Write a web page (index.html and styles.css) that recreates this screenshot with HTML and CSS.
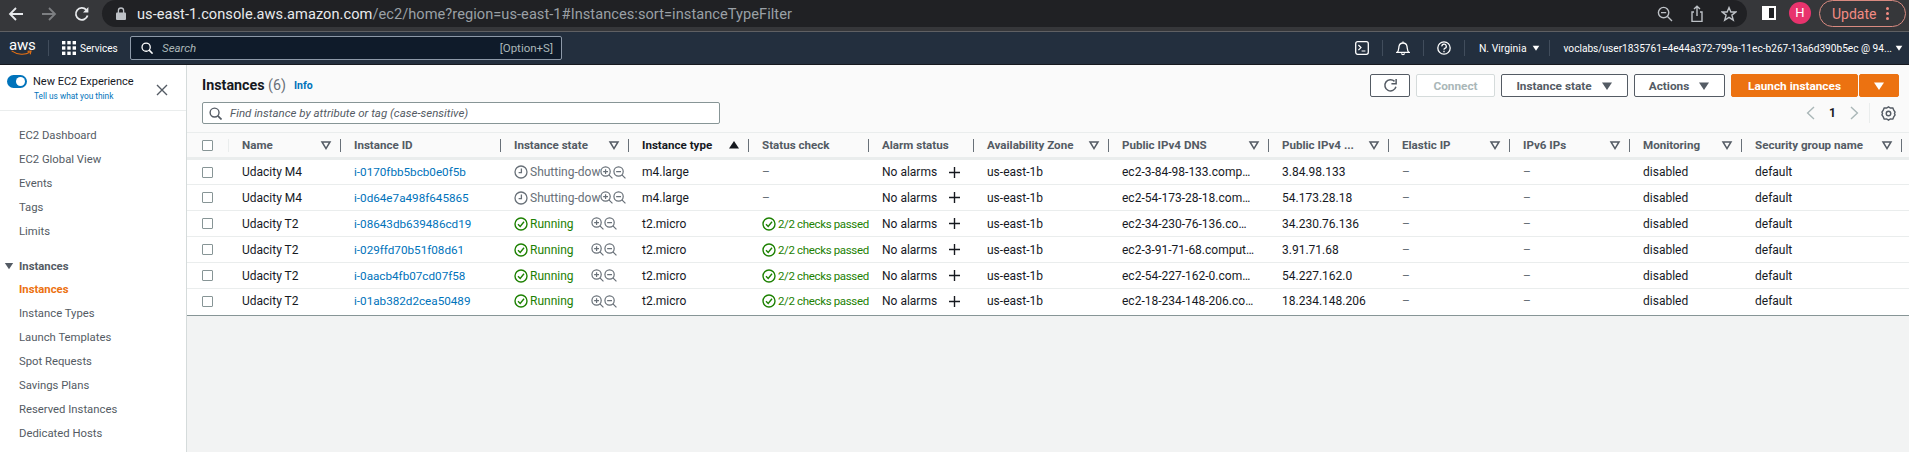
FILE: index.html
```html
<!DOCTYPE html>
<html>
<head>
    <meta charset="utf-8">
    <title>Instances | EC2 Management Console</title>
    <link rel="stylesheet" href="styles.css">
</head>
<body>
    <svg class="defs" width="0" height="0">
        <symbol id="i-clock" viewBox="0 0 14 14"><circle cx="7" cy="7" r="6" fill="none" stroke="currentColor" stroke-width="1.3"/><path d="M7.4 3.4V7.6H4.6" fill="none" stroke="currentColor" stroke-width="1.3"/></symbol>
        <symbol id="i-check" viewBox="0 0 14 14"><circle cx="7" cy="7" r="6" fill="none" stroke="currentColor" stroke-width="1.4"/><path d="M4 7.2 6.2 9.4 10 4.8" fill="none" stroke="currentColor" stroke-width="1.4"/></symbol>
        <symbol id="i-zoomin" viewBox="0 0 14 14"><circle cx="6" cy="6" r="5" fill="none" stroke="currentColor" stroke-width="1.3"/><path d="M9.6 9.6 13.4 13.4M3.4 6H8.6M6 3.4V8.6" fill="none" stroke="currentColor" stroke-width="1.3"/></symbol>
        <symbol id="i-zoomout" viewBox="0 0 14 14"><circle cx="6" cy="6" r="5" fill="none" stroke="currentColor" stroke-width="1.3"/><path d="M9.6 9.6 13.4 13.4M3.4 6H8.6" fill="none" stroke="currentColor" stroke-width="1.3"/></symbol>
        <symbol id="i-plus" viewBox="0 0 12 12"><path d="M6 0V12M0 6H12" fill="none" stroke="currentColor" stroke-width="1.5"/></symbol>
        <symbol id="i-filter" viewBox="0 0 12 12"><path d="M2 3H10L6 9.6Z" fill="none" stroke="currentColor" stroke-width="1.5"/></symbol>
        <symbol id="i-caret" viewBox="0 0 12 12"><path d="M1 2.5H11L6 10Z" fill="currentColor"/></symbol>
        <symbol id="i-sort" viewBox="0 0 12 12"><path d="M1 9.5H11L6 2Z" fill="currentColor"/></symbol>
        <symbol id="i-search" viewBox="0 0 14 14"><circle cx="6" cy="6" r="4.8" fill="none" stroke="currentColor" stroke-width="1.5"/><path d="M9.5 9.5 13.5 13.5" fill="none" stroke="currentColor" stroke-width="1.8"/></symbol>
    </svg>

    <header class="browser">
        <div class="browser-nav">
            <svg width="16" height="16" viewBox="0 0 16 16"><path d="M15 8H2M8 2 2 8 8 14" fill="none" stroke="#e8eaed" stroke-width="1.8"/></svg>
            <svg width="16" height="16" viewBox="0 0 16 16"><path d="M1 8H14M8 2 14 8 8 14" fill="none" stroke="#7d7f82" stroke-width="1.8"/></svg>
            <svg width="16" height="16" viewBox="0 0 16 16"><path d="M13.6 9.6A6 6 0 1 1 12.3 3.8" fill="none" stroke="#e8eaed" stroke-width="1.8"/><path d="M14.4 1V6.4H9Z" fill="#e8eaed"/></svg>
        </div>
        <div class="omnibox">
            <svg class="lock" width="10" height="13" viewBox="0 0 10 13"><path d="M2.4 6V3.6a2.6 2.6 0 0 1 5.2 0V6" fill="none" stroke="#bdc1c6" stroke-width="1.3"/><rect y="5.4" width="10" height="7.6" rx="1" fill="#bdc1c6"/></svg>
            <div class="url"><span class="url-host">us-east-1.console.aws.amazon.com</span>/ec2/home?region=us-east-1#Instances:sort=instanceTypeFilter</div>
            <div class="omni-icons">
                <svg width="16" height="16" viewBox="0 0 16 16"><circle cx="6.6" cy="6.6" r="5.2" fill="none" stroke="#bdc1c6" stroke-width="1.4"/><path d="M10.5 10.5 15 15M4 6.6H9.2" fill="none" stroke="#bdc1c6" stroke-width="1.4"/></svg>
                <svg width="16" height="18" viewBox="0 0 16 18"><path d="M5 7H3V16.4H13V7H11M8 11V1.4M5 4 8 1.2 11 4" fill="none" stroke="#bdc1c6" stroke-width="1.4"/></svg>
                <svg width="16" height="16" viewBox="0 0 16 16"><path d="M8 1.6 9.9 6H14.8L10.9 9.1 12.3 14.2 8 11.4 3.7 14.2 5.1 9.1 1.2 6H6.1Z" fill="none" stroke="#bdc1c6" stroke-width="1.4"/></svg>
            </div>
        </div>
        <div class="panel-btn"><span></span></div>
        <div class="avatar">H</div>
        <div class="update">Update<span class="dots"><i></i><i></i><i></i></span></div>
    </header>

    <nav class="topnav">
        <div class="aws-logo">
            <span>aws</span>
            <svg width="25" height="7" viewBox="0 0 25 7"><path d="M1 1C8 6 17 6 22 2.6M19.6 1.6 23.6 1.2 22.6 5" fill="none" stroke="#ec7211" stroke-width="1.3"/></svg>
        </div>
        <div class="services">
            <svg width="14" height="14" viewBox="0 0 14 14" fill="#fff"><rect width="3.4" height="3.4"/><rect x="5.3" width="3.4" height="3.4"/><rect x="10.6" width="3.4" height="3.4"/><rect y="5.3" width="3.4" height="3.4"/><rect x="5.3" y="5.3" width="3.4" height="3.4"/><rect x="10.6" y="5.3" width="3.4" height="3.4"/><rect y="10.6" width="3.4" height="3.4"/><rect x="5.3" y="10.6" width="3.4" height="3.4"/><rect x="10.6" y="10.6" width="3.4" height="3.4"/></svg>
            Services
        </div>
        <div class="nav-search">
            <svg class="ico-search" width="12" height="12"><use href="#i-search"/></svg>
            <em>Search</em>
            <span>[Option+S]</span>
        </div>
        <div class="nav-right">
            <div class="nav-item">
                <svg width="14" height="14" viewBox="0 0 14 14"><rect x=".7" y=".7" width="12.6" height="12.6" rx="2" fill="none" stroke="#fff" stroke-width="1.3"/><path d="M3.4 4 6 6.6 3.4 9.2M6.6 10H10.4" fill="none" stroke="#fff" stroke-width="1.2"/></svg>
            </div>
            <div class="nav-item">
                <svg width="14" height="15" viewBox="0 0 14 15"><path d="M1 11.4C3 10 2.6 7.4 3 5.4 3.4 3.2 5 2 7 2S10.6 3.2 11 5.4C11.4 7.4 11 10 13 11.4ZM7 .4V2M5.4 12.4A1.7 1.7 0 0 0 8.6 12.4" fill="none" stroke="#fff" stroke-width="1.3"/></svg>
            </div>
            <div class="nav-item">
                <svg width="14" height="14" viewBox="0 0 14 14"><circle cx="7" cy="7" r="6.2" fill="none" stroke="#fff" stroke-width="1.3"/><path d="M4.9 5.4A2.2 2.2 0 1 1 7.8 7.4C7.2 7.7 7 8 7 8.8M7 9.8V11.2" fill="none" stroke="#fff" stroke-width="1.3"/></svg>
            </div>
            <div class="nav-item nav-text">N. Virginia <svg width="8" height="8"><use href="#i-caret"/></svg></div>
            <div class="nav-item nav-text nav-user">voclabs/user1835761=4e44a372-799a-11ec-b267-13a6d390b5ec @ 94... <svg width="8" height="8"><use href="#i-caret"/></svg></div>
        </div>
    </nav>

    <div class="layout">
        <aside class="sidebar">
            <div class="side-top">
                <div class="side-new">
                    <div class="toggle-row"><span class="toggle"></span>New EC2 Experience</div>
                    <a class="side-feedback">Tell us what you think</a>
                </div>
                <svg class="side-close" width="12" height="12" viewBox="0 0 12 12"><path d="M1 1 11 11M11 1 1 11" fill="none" stroke="#545b64" stroke-width="1.4"/></svg>
            </div>
            <ul class="side-list">
                <li>EC2 Dashboard</li>
                <li>EC2 Global View</li>
                <li>Events</li>
                <li>Tags</li>
                <li>Limits</li>
            </ul>
            <div class="side-group"><svg width="10" height="10"><use href="#i-caret"/></svg>Instances</div>
            <ul class="side-list side-list-sub">
                <li class="active">Instances</li>
                <li>Instance Types</li>
                <li>Launch Templates</li>
                <li>Spot Requests</li>
                <li>Savings Plans</li>
                <li>Reserved Instances</li>
                <li>Dedicated Hosts</li>
            </ul>
        </aside>

        <main class="content">
            <div class="content-head">
                <div class="title-row">
                    <h1>Instances <span class="count">(6)</span></h1>
                    <a class="info">Info</a>
                    <div class="actions">
                        <button class="btn btn-icon"><svg width="15" height="15" viewBox="0 0 16 16"><path d="M13.8 9.4A6 6 0 1 1 12.3 3.6" fill="none" stroke="#545b64" stroke-width="1.6"/><path d="M14 1V6H9" fill="none" stroke="#545b64" stroke-width="1.6"/></svg></button>
                        <button class="btn btn-disabled">Connect</button>
                        <button class="btn btn-state">Instance state <svg width="12" height="12"><use href="#i-caret"/></svg></button>
                        <button class="btn btn-actions">Actions <svg width="12" height="12"><use href="#i-caret"/></svg></button>
                        <div class="launch">
                            <button class="btn btn-primary">Launch instances</button>
                            <button class="btn btn-primary btn-arrow"><svg width="12" height="12"><use href="#i-caret"/></svg></button>
                        </div>
                    </div>
                </div>
                <div class="filter-row">
                    <div class="filter-input">
                        <svg width="13" height="13"><use href="#i-search"/></svg>
                        <em>Find instance by attribute or tag (case-sensitive)</em>
                    </div>
                    <div class="pager">
                        <svg width="9" height="14" viewBox="0 0 9 14"><path d="M8 1 1.6 7 8 13" fill="none" stroke="#aab7b8" stroke-width="1.4"/></svg>
                        <b>1</b>
                        <svg width="9" height="14" viewBox="0 0 9 14"><path d="M1 1 7.4 7 1 13" fill="none" stroke="#aab7b8" stroke-width="1.4"/></svg>
                        <div class="pager-gear">
                            <svg width="15" height="15" viewBox="0 0 16 16"><path d="M8 1 10 2.2 12.6 2 13.6 4.4 15 6.4 14.4 8 15 9.6 13.6 11.6 12.6 14 10 13.8 8 15 6 13.8 3.4 14 2.4 11.6 1 9.6 1.6 8 1 6.4 2.4 4.4 3.4 2 6 2.2Z" fill="none" stroke="#545b64" stroke-width="1.5"/><circle cx="8" cy="8" r="2.4" fill="none" stroke="#545b64" stroke-width="1.5"/></svg>
                        </div>
                    </div>
                </div>
            </div>

            <table class="instances">
                <colgroup>
                    <col class="c-check"><col class="c-name"><col class="c-id"><col class="c-state"><col class="c-type"><col class="c-status"><col class="c-alarm"><col class="c-az"><col class="c-dns"><col class="c-ip"><col class="c-eip"><col class="c-v6"><col class="c-mon"><col class="c-sg"><col class="c-end">
                </colgroup>
                <thead>
                    <tr>
                        <th><div class="hd hd-check"><span class="box"></span></div></th>
                        <th><div class="hd">Name<svg width="12" height="12"><use href="#i-filter"/></svg></div></th>
                        <th><div class="hd">Instance ID</div></th>
                        <th><div class="hd">Instance state<svg width="12" height="12"><use href="#i-filter"/></svg></div></th>
                        <th><div class="hd hd-sorted">Instance type<svg width="12" height="12"><use href="#i-sort"/></svg></div></th>
                        <th><div class="hd">Status check</div></th>
                        <th><div class="hd">Alarm status</div></th>
                        <th><div class="hd">Availability Zone<svg width="12" height="12"><use href="#i-filter"/></svg></div></th>
                        <th><div class="hd">Public IPv4 DNS<svg width="12" height="12"><use href="#i-filter"/></svg></div></th>
                        <th><div class="hd">Public IPv4 ...<svg width="12" height="12"><use href="#i-filter"/></svg></div></th>
                        <th><div class="hd">Elastic IP<svg width="12" height="12"><use href="#i-filter"/></svg></div></th>
                        <th><div class="hd">IPv6 IPs<svg width="12" height="12"><use href="#i-filter"/></svg></div></th>
                        <th><div class="hd">Monitoring<svg width="12" height="12"><use href="#i-filter"/></svg></div></th>
                        <th><div class="hd">Security group name<svg width="12" height="12"><use href="#i-filter"/></svg></div></th>
                        <th></th>
                    </tr>
                </thead>
                <tbody>
                    <tr>
                        <td class="cell-check"><span class="box"></span></td>
                        <td>Udacity M4</td>
                        <td><a>i-0170fbb5bcb0e0f5b</a></td>
                        <td><div class="state state-off"><svg width="14" height="14"><use href="#i-clock"/></svg><span class="state-name state-cut">Shutting-dow</span><span class="zooms"><svg width="13" height="13"><use href="#i-zoomin"/></svg><svg width="13" height="13"><use href="#i-zoomout"/></svg></span></div></td>
                        <td>m4.large</td>
                        <td class="muted">–</td>
                        <td><div class="alarm">No alarms<svg width="11" height="11"><use href="#i-plus"/></svg></div></td>
                        <td>us-east-1b</td>
                        <td>ec2-3-84-98-133.comp…</td>
                        <td>3.84.98.133</td>
                        <td class="muted">–</td>
                        <td class="muted">–</td>
                        <td>disabled</td>
                        <td>default</td>
                        <td></td>
                    </tr>
                    <tr>
                        <td class="cell-check"><span class="box"></span></td>
                        <td>Udacity M4</td>
                        <td><a>i-0d64e7a498f645865</a></td>
                        <td><div class="state state-off"><svg width="14" height="14"><use href="#i-clock"/></svg><span class="state-name state-cut">Shutting-dow</span><span class="zooms"><svg width="13" height="13"><use href="#i-zoomin"/></svg><svg width="13" height="13"><use href="#i-zoomout"/></svg></span></div></td>
                        <td>m4.large</td>
                        <td class="muted">–</td>
                        <td><div class="alarm">No alarms<svg width="11" height="11"><use href="#i-plus"/></svg></div></td>
                        <td>us-east-1b</td>
                        <td>ec2-54-173-28-18.com…</td>
                        <td>54.173.28.18</td>
                        <td class="muted">–</td>
                        <td class="muted">–</td>
                        <td>disabled</td>
                        <td>default</td>
                        <td></td>
                    </tr>
                    <tr>
                        <td class="cell-check"><span class="box"></span></td>
                        <td>Udacity T2</td>
                        <td><a>i-08643db639486cd19</a></td>
                        <td><div class="state state-on"><svg width="14" height="14"><use href="#i-check"/></svg><span class="state-name">Running</span><span class="zooms"><svg width="13" height="13"><use href="#i-zoomin"/></svg><svg width="13" height="13"><use href="#i-zoomout"/></svg></span></div></td>
                        <td>t2.micro</td>
                        <td><div class="checks"><svg width="14" height="14"><use href="#i-check"/></svg><span>2/2 checks passed</span></div></td>
                        <td><div class="alarm">No alarms<svg width="11" height="11"><use href="#i-plus"/></svg></div></td>
                        <td>us-east-1b</td>
                        <td>ec2-34-230-76-136.co…</td>
                        <td>34.230.76.136</td>
                        <td class="muted">–</td>
                        <td class="muted">–</td>
                        <td>disabled</td>
                        <td>default</td>
                        <td></td>
                    </tr>
                    <tr>
                        <td class="cell-check"><span class="box"></span></td>
                        <td>Udacity T2</td>
                        <td><a>i-029ffd70b51f08d61</a></td>
                        <td><div class="state state-on"><svg width="14" height="14"><use href="#i-check"/></svg><span class="state-name">Running</span><span class="zooms"><svg width="13" height="13"><use href="#i-zoomin"/></svg><svg width="13" height="13"><use href="#i-zoomout"/></svg></span></div></td>
                        <td>t2.micro</td>
                        <td><div class="checks"><svg width="14" height="14"><use href="#i-check"/></svg><span>2/2 checks passed</span></div></td>
                        <td><div class="alarm">No alarms<svg width="11" height="11"><use href="#i-plus"/></svg></div></td>
                        <td>us-east-1b</td>
                        <td>ec2-3-91-71-68.comput…</td>
                        <td>3.91.71.68</td>
                        <td class="muted">–</td>
                        <td class="muted">–</td>
                        <td>disabled</td>
                        <td>default</td>
                        <td></td>
                    </tr>
                    <tr>
                        <td class="cell-check"><span class="box"></span></td>
                        <td>Udacity T2</td>
                        <td><a>i-0aacb4fb07cd07f58</a></td>
                        <td><div class="state state-on"><svg width="14" height="14"><use href="#i-check"/></svg><span class="state-name">Running</span><span class="zooms"><svg width="13" height="13"><use href="#i-zoomin"/></svg><svg width="13" height="13"><use href="#i-zoomout"/></svg></span></div></td>
                        <td>t2.micro</td>
                        <td><div class="checks"><svg width="14" height="14"><use href="#i-check"/></svg><span>2/2 checks passed</span></div></td>
                        <td><div class="alarm">No alarms<svg width="11" height="11"><use href="#i-plus"/></svg></div></td>
                        <td>us-east-1b</td>
                        <td>ec2-54-227-162-0.com…</td>
                        <td>54.227.162.0</td>
                        <td class="muted">–</td>
                        <td class="muted">–</td>
                        <td>disabled</td>
                        <td>default</td>
                        <td></td>
                    </tr>
                    <tr>
                        <td class="cell-check"><span class="box"></span></td>
                        <td>Udacity T2</td>
                        <td><a>i-01ab382d2cea50489</a></td>
                        <td><div class="state state-on"><svg width="14" height="14"><use href="#i-check"/></svg><span class="state-name">Running</span><span class="zooms"><svg width="13" height="13"><use href="#i-zoomin"/></svg><svg width="13" height="13"><use href="#i-zoomout"/></svg></span></div></td>
                        <td>t2.micro</td>
                        <td><div class="checks"><svg width="14" height="14"><use href="#i-check"/></svg><span>2/2 checks passed</span></div></td>
                        <td><div class="alarm">No alarms<svg width="11" height="11"><use href="#i-plus"/></svg></div></td>
                        <td>us-east-1b</td>
                        <td>ec2-18-234-148-206.co…</td>
                        <td>18.234.148.206</td>
                        <td class="muted">–</td>
                        <td class="muted">–</td>
                        <td>disabled</td>
                        <td>default</td>
                        <td></td>
                    </tr>
                </tbody>
            </table>
        </main>
    </div>
</body>
</html>
```

FILE: styles.css
```css
* {
    box-sizing: border-box;
}

html, body {
    height: 100%;
}

body {
    margin: 0;
    display: flex;
    flex-direction: column;
    overflow: hidden;
    font-family: Roboto, "Liberation Sans", sans-serif;
    font-size: 12px;
    color: #16191f;
    background: #f2f3f3;
}

.defs {
    display: none;
}

/* browser toolbar */
.browser {
    height: 32px;
    flex: none;
    display: flex;
    align-items: flex-start;
    background: #36373a;
    border-bottom: 1px solid #5f6063;
}

.browser-nav {
    width: 102px;
    height: 27px;
    padding-left: 8px;
    display: flex;
    align-items: center;
    gap: 17px;
}

.omnibox {
    width: 1645px;
    height: 27px;
    padding: 0 10px 0 14px;
    display: flex;
    align-items: center;
    background: #202124;
    border-radius: 14px;
}

.lock {
    flex: none;
}

.url {
    margin-left: 11px;
    font-size: 14.6px;
    letter-spacing: .05px;
    color: #9aa0a6;
    white-space: nowrap;
}

.url-host {
    color: #e8eaed;
}

.omni-icons {
    margin-left: auto;
    display: flex;
    align-items: center;
    gap: 16px;
}

.panel-btn {
    width: 14px;
    height: 14px;
    margin: 6px 0 0 15px;
    padding: 2px 2px 2px 7px;
    background: #fff;
}

.panel-btn span {
    display: block;
    height: 100%;
    background: #202124;
}

.avatar {
    width: 22px;
    height: 22px;
    margin: 2px 0 0 13px;
    border-radius: 50%;
    background: #e8336d;
    color: #fff;
    font-size: 13px;
    line-height: 22px;
    text-align: center;
}

.update {
    width: 87px;
    height: 27px;
    margin-left: 8px;
    padding-left: 12px;
    display: flex;
    align-items: center;
    border: 1px solid #d98a80;
    border-radius: 14px;
    color: #f28b82;
    font-size: 14px;
}

.dots {
    margin-left: 10px;
    display: flex;
    flex-direction: column;
    gap: 2px;
}

.dots i {
    width: 3px;
    height: 3px;
    border-radius: 50%;
    background: #f28b82;
}

/* aws nav */
.topnav {
    height: 33px;
    flex: none;
    display: flex;
    align-items: center;
    background: #232f3e;
    border-bottom: 1px solid #16191f;
    color: #fff;
}

.aws-logo {
    width: 48px;
    height: 16px;
    margin-left: 9px;
    display: flex;
    flex-direction: column;
    font-size: 15px;
    line-height: 11px;
    letter-spacing: -.2px;
}

.aws-logo svg {
    margin-top: -1px;
}

.services {
    width: 82px;
    height: 16px;
    margin-left: -9px;
    padding-left: 13px;
    display: flex;
    align-items: center;
    gap: 4px;
    border-left: 1px solid #414d5c;
    font-size: 10px;
}

.nav-search {
    width: 432px;
    height: 24px;
    padding: 0 8px 0 10px;
    display: flex;
    align-items: center;
    background: #0f1b2a;
    border: 1px solid #8d99a8;
    border-radius: 2px;
    color: #aab7b8;
    font-size: 11.5px;
}

.ico-search {
    margin-right: 9px;
    color: #fff;
}

.nav-search span {
    margin-left: auto;
}

.nav-right {
    margin-left: auto;
    padding-right: 6px;
    display: flex;
    align-items: center;
}

.nav-item {
    width: 41px;
    height: 16px;
    display: flex;
    align-items: center;
    justify-content: center;
    border-right: 1px solid #414d5c;
}

.nav-text {
    width: auto;
    padding: 0 9px 0 14px;
    gap: 5px;
    font-size: 10.4px;
    white-space: nowrap;
}

.nav-user {
    padding-right: 0;
    gap: 3px;
    border-right: 0;
    font-size: 10.15px;
}

/* page */
.layout {
    flex: 1;
    min-height: 0;
    display: flex;
}

.sidebar {
    width: 187px;
    flex: none;
    background: #fff;
    border-right: 1px solid #d5dbdb;
    color: #545b64;
    font-size: 11.3px;
}

.side-top {
    height: 46px;
    padding: 10px 0 0 7px;
    display: flex;
    border-bottom: 1px solid #eaeded;
}

.side-new {
    width: 149px;
}

.toggle-row {
    display: flex;
    align-items: center;
    gap: 6px;
    color: #16191f;
    font-size: 11px;
}

.toggle {
    width: 20px;
    height: 13px;
    border-radius: 7px;
    background: #0073bb;
    display: flex;
    align-items: center;
    justify-content: flex-end;
    padding-right: 2px;
}

.toggle::after {
    content: "";
    width: 9px;
    height: 9px;
    border-radius: 50%;
    background: #fff;
}

.side-feedback {
    display: block;
    margin: 3px 0 0 27px;
    color: #0073bb;
    font-size: 8.3px;
}

.side-close {
    margin-top: 9px;
}

.side-list {
    margin: 0;
    padding: 13px 0 0 19px;
    list-style: none;
}

.side-list li {
    height: 24px;
    line-height: 24px;
}

.side-list-sub {
    padding-top: 0;
}

.side-list .active {
    color: #ec7211;
    font-weight: 700;
}

.side-group {
    height: 24px;
    margin-top: 10px;
    padding-left: 4px;
    display: flex;
    align-items: center;
    gap: 5px;
    font-weight: 700;
}

.content {
    flex: 1;
    min-width: 0;
}

.content-head {
    height: 67px;
    padding: 9px 10px 0 15px;
    background: #fafafa;
}

.title-row {
    height: 23px;
    display: flex;
    align-items: center;
}

h1 {
    margin: 0 0 2px;
    font-size: 14.3px;
    font-weight: 700;
}

.count {
    font-weight: 400;
    color: #687078;
}

.info {
    margin-left: 8px;
    color: #0073bb;
    font-size: 10.5px;
    font-weight: 700;
}

.actions {
    margin-left: auto;
    display: flex;
    gap: 6px;
}

.btn {
    height: 23px;
    padding: 0;
    display: flex;
    align-items: center;
    justify-content: center;
    gap: 9px;
    background: #fff;
    border: 1px solid #545b64;
    border-radius: 2px;
    color: #545b64;
    font: 700 11.8px Roboto, "Liberation Sans", sans-serif;
}

.btn-icon {
    width: 40px;
}

.btn-disabled {
    width: 79px;
    border-color: #d5dbdb;
    color: #aab7b8;
}

.btn-state {
    width: 127px;
}

.btn-actions {
    width: 91px;
}

.launch {
    display: flex;
    gap: 1px;
}

.btn-primary {
    width: 127px;
    background: #ec7211;
    border-color: #ec7211;
    color: #fff;
}

.btn-arrow {
    width: 40px;
}

.filter-row {
    margin-top: 5px;
    display: flex;
    align-items: center;
    justify-content: space-between;
}

.filter-input {
    width: 518px;
    height: 22px;
    padding-left: 6px;
    display: flex;
    align-items: center;
    gap: 8px;
    background: #fff;
    border: 1px solid #879596;
    border-radius: 2px;
    color: #545b64;
    font-size: 11.5px;
}

.pager {
    height: 20px;
    margin-right: 3px;
    display: flex;
    align-items: center;
    gap: 14px;
}

.pager b {
    font-size: 12px;
}

.pager-gear {
    height: 100%;
    margin-left: -4px;
    padding-left: 11px;
    display: flex;
    align-items: center;
    border-left: 1px solid #eaeded;
}

/* table */
.instances {
    width: 1722px;
    table-layout: fixed;
    border-collapse: collapse;
    background: #fff;
}

.c-check { width: 42px; }
.c-name { width: 112px; }
.c-id { width: 160px; }
.c-state { width: 128px; }
.c-type { width: 120px; }
.c-status { width: 120px; }
.c-alarm { width: 105px; }
.c-az { width: 135px; }
.c-dns { width: 160px; }
.c-ip { width: 120px; }
.c-eip { width: 121px; }
.c-v6 { width: 120px; }
.c-mon { width: 112px; }
.c-sg { width: 160px; }
.c-end { width: 7px; }

.instances th {
    height: 26px;
    padding: 0;
    background: #fafafa;
    border-top: 1px solid #eaeded;
    border-bottom: 3px solid #eaeded;
    color: #545b64;
    text-align: left;
    font-size: 11.6px;
    font-weight: 700;
}

.hd {
    height: 13px;
    padding: 0 8px 0 13px;
    display: flex;
    align-items: center;
    justify-content: space-between;
    border-right: 1px solid #687078;
    white-space: nowrap;
}

.hd-check {
    padding-left: 15px;
    border-right-color: #eaeded;
}

.hd-sorted {
    color: #16191f;
}

.hd svg {
    flex: none;
    color: #545b64;
}

.hd-sorted svg {
    color: #16191f;
}

.instances td {
    height: 26px;
    padding: 0 0 0 13px;
    border-bottom: 1px solid #eaeded;
    white-space: nowrap;
    overflow: hidden;
}

.instances tbody tr:last-child td {
    height: 27px;
    padding-bottom: 2px;
    border-bottom: 1px solid #879596;
}

.instances .cell-check {
    padding: 0 0 0 15px;
}

.box {
    display: block;
    width: 11px;
    height: 11px;
    background: #fff;
    border: 1px solid #879596;
    border-radius: 1px;
}

.instances a {
    color: #0073bb;
    font-size: 11.7px;
}

.muted {
    color: #687078;
}

.state, .checks {
    display: flex;
    align-items: center;
    gap: 2px;
}

.state-off {
    color: #687078;
}

.state-on, .checks {
    color: #1d8102;
}

.state svg, .checks svg {
    flex: none;
}

.state-name {
    width: 59px;
}

.state-cut {
    width: 68px;
}

.zooms {
    display: flex;
    color: #687078;
}

.checks {
    font-size: 11.5px;
    letter-spacing: -.35px;
}

.alarm {
    display: flex;
    align-items: center;
    justify-content: space-between;
    width: 78px;
}
```
